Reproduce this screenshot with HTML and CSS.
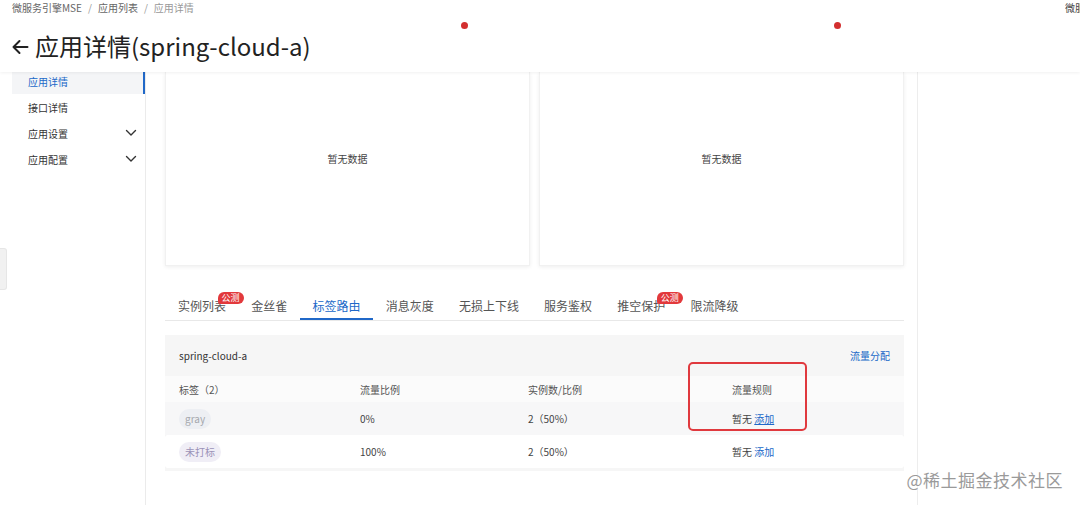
FILE: index.html
```html
<!DOCTYPE html>
<html lang="zh-CN">
<head>
<meta charset="utf-8">
<title>应用详情</title>
<link rel="stylesheet" href="styles.css">
</head>
<body>
<div class="page">
  <header class="header">
    <div class="crumb-row">
      <nav class="crumbs">
        <span class="crumb">微服务引擎MSE</span>
        <span class="sep">/</span>
        <span class="crumb">应用列表</span>
        <span class="sep">/</span>
        <span class="crumb current">应用详情</span>
      </nav>
      <span class="crumb-right">微服务</span>
    </div>
    <h1 class="title">
      <svg class="back" width="18" height="16" viewBox="0 0 18 16"><path d="M16.5 8H2.5M8.5 2L2.5 8l6 6" fill="none" stroke="#222" stroke-width="2" stroke-linecap="round" stroke-linejoin="round"/></svg>
      <span>应用详情(spring-cloud-a)</span>
    </h1>
    <span class="dot dot-a"></span>
    <span class="dot dot-b"></span>
  </header>

  <div class="body">
    <aside class="sidebar">
      <div class="side-list">
        <div class="side-item active">应用详情</div>
        <div class="side-item">接口详情</div>
        <div class="side-item">应用设置<svg class="chev" width="12" height="8" viewBox="0 0 12 8"><path d="M1.5 1.5L6 6l4.5-4.5" fill="none" stroke="#333" stroke-width="1.4" stroke-linecap="round" stroke-linejoin="round"/></svg></div>
        <div class="side-item">应用配置<svg class="chev" width="12" height="8" viewBox="0 0 12 8"><path d="M1.5 1.5L6 6l4.5-4.5" fill="none" stroke="#333" stroke-width="1.4" stroke-linecap="round" stroke-linejoin="round"/></svg></div>
      </div>
    </aside>

    <main class="main">
      <div class="cards">
        <div class="card">暂无数据</div>
        <div class="card">暂无数据</div>
      </div>

      <div class="tabs">
        <div class="tab">实例列表<span class="badge">公测</span></div>
        <div class="tab">金丝雀</div>
        <div class="tab active">标签路由</div>
        <div class="tab">消息灰度</div>
        <div class="tab">无损上下线</div>
        <div class="tab">服务鉴权</div>
        <div class="tab">推空保护<span class="badge">公测</span></div>
        <div class="tab">限流降级</div>
      </div>

      <section class="panel">
        <div class="panel-head">
          <span class="app-name">spring-cloud-a</span>
          <a class="link">流量分配</a>
        </div>
        <div class="table">
          <div class="row head">
            <div>标签（2）</div>
            <div>流量比例</div>
            <div>实例数/比例</div>
            <div>流量规则</div>
          </div>
          <div class="row r1">
            <div><span class="tag tag-gray">gray</span></div>
            <div>0%</div>
            <div>2（50%）</div>
            <div>暂无 <a class="link under">添加</a></div>
          </div>
          <div class="row r2">
            <div><span class="tag tag-none">未打标</span></div>
            <div>100%</div>
            <div>2（50%）</div>
            <div>暂无 <a class="link">添加</a></div>
          </div>
        </div>
        <div class="highlight"></div>
      </section>
    </main>
    <div class="right"></div>
  </div>

  <div class="edge-tab"></div>
  <div class="watermark">@稀土掘金技术社区</div>
</div>
</body>
</html>
```

FILE: styles.css
```css
* { box-sizing: border-box; }
html, body { margin: 0; padding: 0; }
body {
  width: 1080px;
  height: 505px;
  overflow: hidden;
  background: #fff;
  font-family: "Noto Sans CJK SC", "Noto Sans", sans-serif;
  color: #333;
}
.page {
  position: relative;
  width: 1080px;
  height: 505px;
  overflow: hidden;
}

/* header */
.header {
  position: relative;
  height: 72px;
  background: #fff;
  box-shadow: 0 1px 3px rgba(0,0,0,0.06);
  z-index: 2;
}
.crumb-row {
  display: flex;
  height: 14px;
  align-items: center;
  padding-left: 12px;
  font-size: 10px;
  color: #666;
}
.crumbs { display: flex; align-items: center; gap: 5px; }
.sep { color: #999; padding: 0 1px; }
.crumb.current { color: #999; }
.crumb-right {
  margin-left: auto;
  width: 15px;
  overflow: hidden;
  white-space: nowrap;
  color: #444;
}
.title {
  margin: 16px 0 0 0;
  padding-left: 11px;
  height: 32px;
  display: flex;
  align-items: center;
  gap: 6px;
  font-size: 24px;
  font-weight: 400;
  color: #222;
  line-height: 32px;
}
.back { flex-shrink: 0; margin-top: 1px; }
.dot {
  position: absolute;
  width: 7px;
  height: 7px;
  border-radius: 50%;
  background: #d32f2f;
  top: 22px;
}
.dot-a { left: 461px; }
.dot-b { left: 834px; }

/* body */
.body {
  display: flex;
  height: 433px;
}
.sidebar {
  width: 146px;
  flex-shrink: 0;
  border-right: 1px solid #ebebeb;
  overflow: hidden;
}
.side-list { margin-top: -4px; padding-left: 12px; }
.side-item {
  height: 26px;
  display: flex;
  align-items: center;
  padding-left: 16px;
  padding-right: 8px;
  font-size: 10px;
  color: #333;
  justify-content: space-between;
}
.side-item.active {
  background: #f4f5f7;
  color: #2068c8;
  border-right: 2px solid #2068c8;
}
.chev { flex-shrink: 0; }

.main {
  width: 772px;
  flex-shrink: 0;
  padding: 0 13px 0 19px;
  border-right: 1px solid #ededed;
}
.cards {
  display: flex;
  gap: 9px;
  height: 194px;
}
.card {
  flex: 1;
  background: #fff;
  border: 1px solid #f1f1f1;
  border-top: none;
  box-shadow: 0 1px 4px rgba(0,0,0,0.07);
  display: flex;
  align-items: center;
  justify-content: center;
  font-size: 10px;
  color: #444;
  padding-bottom: 20px;
}

/* tabs */
.tabs {
  display: flex;
  padding-top: 24px;
  padding-left: 0.5px;
  border-bottom: 1px solid #e8e8e8;
}
.tab {
  position: relative;
  height: 30px;
  padding: 2px 12.6px 0;
  line-height: 28px;
  font-size: 12px;
  color: #555;
  white-space: nowrap;
}
.tab.active {
  color: #2068c8;
  border-bottom: 2px solid #2068c8;
  margin-bottom: -1px;
}
.badge {
  position: absolute;
  left: 52px;
  top: 2px;
  height: 12px;
  padding: 0 4px;
  border-radius: 6px 6px 6px 2px;
  background: #e2393c;
  color: #fff;
  font-size: 9px;
  line-height: 12px;
}

/* panel */
.panel {
  position: relative;
  margin-top: 14px;
  background: #f6f6f6;
  padding-bottom: 3px;
}
.panel-head {
  height: 41px;
  display: flex;
  align-items: center;
  justify-content: space-between;
  padding: 0 14px;
  font-size: 10px;
  color: #333;
}
.link { color: #2068c8; cursor: pointer; }
.link.under { text-decoration: underline; }
.table { font-size: 10px; color: #444; }
.row {
  display: grid;
  grid-template-columns: 181px 168px 204px 1fr;
  align-items: center;
  padding-left: 14px;
}
.row.head { height: 26px; background: #fbfbfb; color: #555; }
.row.r1 { height: 33px; background: #f7f7f8; }
.row.r2 { height: 33px; background: #fff; border-radius: 3px; }
.tag {
  display: inline-block;
  height: 20px;
  line-height: 20px;
  padding: 0 6px;
  border-radius: 10px;
  font-size: 10px;
}
.tag-gray { background: #edeff3; color: #a5a8ad; }
.tag-none { background: #f0eef6; color: #9b92b8; }
.highlight {
  position: absolute;
  left: 523px;
  top: 27px;
  width: 119px;
  height: 69px;
  border: 2px solid #e0393e;
  border-radius: 5px;
}

.right { flex: 1; }

.edge-tab {
  position: absolute;
  left: 0;
  top: 248px;
  width: 7px;
  height: 42px;
  background: #f1f1f1;
  border: 1px solid #e6e6e6;
  border-left: none;
  border-radius: 0 3px 3px 0;
}
.watermark {
  position: absolute;
  right: 17px;
  top: 467px;
  font-size: 17px;
  color: #9a9a9a;
  text-shadow: 0 0 2px #fff, 0 0 2px #fff;
  letter-spacing: 0.5px;
}
```
